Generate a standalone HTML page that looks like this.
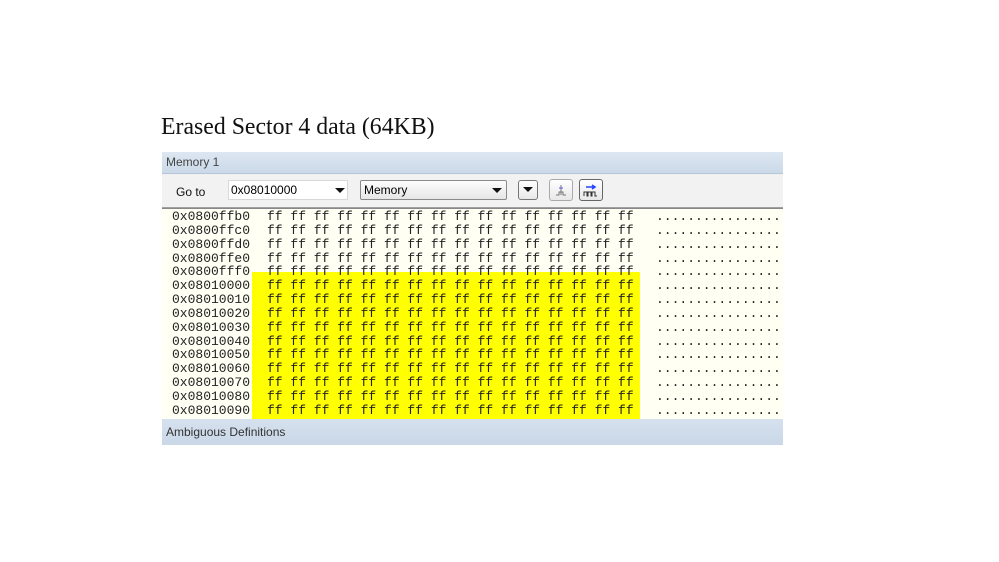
<!DOCTYPE html>
<html><head><meta charset="utf-8"><style>
body{margin:0;width:999px;height:562px;background:#fff;position:relative;overflow:hidden}
.t{position:absolute;left:161px;top:114px;font:23.8px "Liberation Serif",serif;color:#111;white-space:nowrap}
.panel{position:absolute;left:162px;top:152px;width:621px;height:293px;background:#f0f0f0;overflow:hidden}
.hd{position:absolute;left:0;top:0;width:621px;height:22px;background:linear-gradient(#dde7f2,#cbd9e8);border-bottom:1px solid #b7c7d9;font:12px "Liberation Sans",sans-serif;color:#444;line-height:21px;padding-left:4px;box-sizing:border-box}
.tb{position:absolute;left:0;top:23px;width:621px;height:32px;background:#f2f2f2;border-bottom:1px solid #a0a0a0}
.lbl{position:absolute;left:14px;top:10px;font:12px "Liberation Sans",sans-serif;color:#111}
.in{position:absolute;left:66px;top:5px;width:120px;height:20px;background:#fff;border:1px solid #d8d8d8;font:12px "Liberation Sans",sans-serif;line-height:18px;padding-left:2px;box-sizing:border-box}
.sel{position:absolute;left:198px;top:5px;width:147px;height:20px;background:linear-gradient(#fdfdfd,#e6e6e6);border:1px solid #8a8a8a;border-radius:2px;font:12px "Liberation Sans",sans-serif;line-height:18px;padding-left:3px;box-sizing:border-box}
.arr{position:absolute;width:0;height:0;border-left:5px solid transparent;border-right:5px solid transparent;border-top:5px solid #111}
.btn{position:absolute;top:4px;width:24px;height:22px;border:1px solid #aaa;border-radius:3px;background:linear-gradient(#fff,#e8e8e8);box-sizing:border-box}
.data{position:absolute;left:0;top:56px;width:621px;height:210px;background:#fffff4;border-top:1px solid #888}
.yl{position:absolute;left:90px;top:63px;width:388px;height:150px;background:#ffff00}
pre{position:absolute;margin:0;font:13px/13.85px "Liberation Mono",monospace;color:#222}
.ft{position:absolute;left:0;top:267px;width:621px;height:26px;background:linear-gradient(#d6e1ee,#c9d7e7);font:12px "Liberation Sans",sans-serif;color:#333;line-height:27px;padding-left:4px;box-sizing:border-box}
</style></head><body>
<div class="t">Erased Sector 4 data (64KB)</div>
<div class="panel">
<div class="hd">Memory 1</div>
<div class="tb">
<div class="lbl">Go to</div>
<div class="in">0x08010000<div class="arr" style="left:106px;top:7px"></div></div>
<div class="sel">Memory<div class="arr" style="left:131px;top:7px"></div></div>
<div class="btn" style="left:356px;width:20px;height:20px;top:5px;border-color:#777"><div class="arr" style="left:4px;top:6px"></div></div>
<div class="btn" style="left:387px"><svg width="22" height="20"><path d="M11 5v10M6 15h3v-3h4v3h3" stroke="#777" fill="none"/><path d="M9 8h4" stroke="#55f"/></svg></div>
<div class="btn" style="left:417px;border-color:#666"><svg width="22" height="20"><path d="M6 7h9M12 5l3 2-3 2" stroke="#24f" fill="none" stroke-width="1.5"/><path d="M4 16v-4h3v4h1v-4h3v4h1v-4h3v4h2" stroke="#333" fill="none"/></svg></div>
</div>
<div class="data">
<div class="yl"></div>
<pre style="left:10px;top:1px">0x0800ffb0
0x0800ffc0
0x0800ffd0
0x0800ffe0
0x0800fff0
0x08010000
0x08010010
0x08010020
0x08010030
0x08010040
0x08010050
0x08010060
0x08010070
0x08010080
0x08010090</pre>
<pre style="left:105px;top:1px">ff ff ff ff ff ff ff ff ff ff ff ff ff ff ff ff
ff ff ff ff ff ff ff ff ff ff ff ff ff ff ff ff
ff ff ff ff ff ff ff ff ff ff ff ff ff ff ff ff
ff ff ff ff ff ff ff ff ff ff ff ff ff ff ff ff
ff ff ff ff ff ff ff ff ff ff ff ff ff ff ff ff
ff ff ff ff ff ff ff ff ff ff ff ff ff ff ff ff
ff ff ff ff ff ff ff ff ff ff ff ff ff ff ff ff
ff ff ff ff ff ff ff ff ff ff ff ff ff ff ff ff
ff ff ff ff ff ff ff ff ff ff ff ff ff ff ff ff
ff ff ff ff ff ff ff ff ff ff ff ff ff ff ff ff
ff ff ff ff ff ff ff ff ff ff ff ff ff ff ff ff
ff ff ff ff ff ff ff ff ff ff ff ff ff ff ff ff
ff ff ff ff ff ff ff ff ff ff ff ff ff ff ff ff
ff ff ff ff ff ff ff ff ff ff ff ff ff ff ff ff
ff ff ff ff ff ff ff ff ff ff ff ff ff ff ff ff</pre>
<pre style="left:494px;top:1px">................
................
................
................
................
................
................
................
................
................
................
................
................
................
................</pre>
</div>
<div class="ft">Ambiguous Definitions</div>
</div>
</body></html>
